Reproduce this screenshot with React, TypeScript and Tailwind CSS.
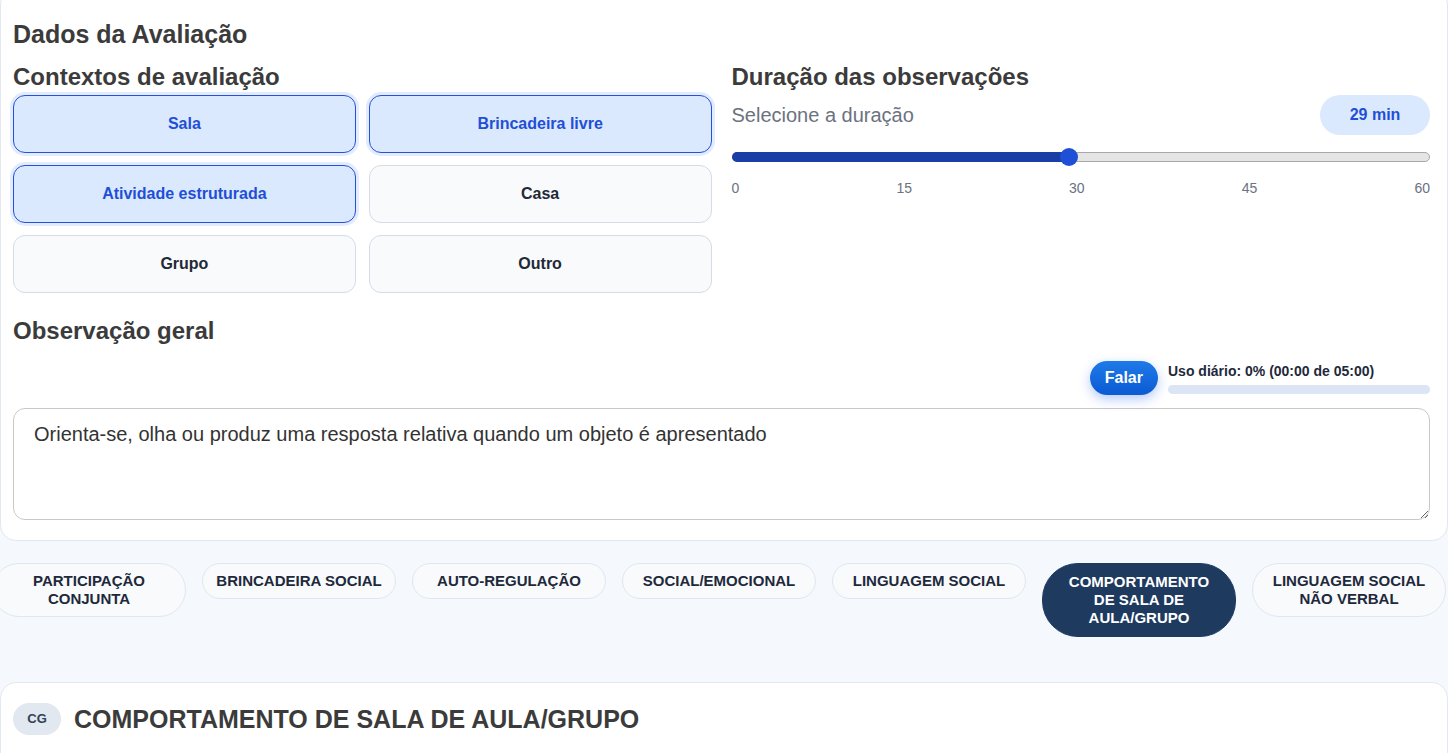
import { useState } from "react"

const contexts = [
  { label: "Sala", active: true },
  { label: "Brincadeira livre", active: true },
  { label: "Atividade estruturada", active: true },
  { label: "Casa", active: false },
  { label: "Grupo", active: false },
  { label: "Outro", active: false },
]

const tabs = [
  "PARTICIPAÇÃO CONJUNTA",
  "BRINCADEIRA SOCIAL",
  "AUTO-REGULAÇÃO",
  "SOCIAL/EMOCIONAL",
  "LINGUAGEM SOCIAL",
  "COMPORTAMENTO DE SALA DE AULA/GRUPO",
  "LINGUAGEM SOCIAL NÃO VERBAL",
]

export default function App() {
  const [minutes] = useState(29)
  const [activeTab] = useState(5)
  const pct = (minutes / 60) * 100

  return (
    <div className="min-h-screen overflow-hidden bg-[#f5f8fd] font-['Liberation_Sans',Arial,sans-serif]">
      {/* Dados da avaliação */}
      <div className="-mt-3 rounded-2xl border border-[#e2e8f0] bg-white px-3 pt-[29px] pb-5 text-[#3b3b3b]">
        <h2 className="text-[25px] leading-[32px] font-bold">Dados da Avaliação</h2>

        <div className="mt-[13px] grid grid-cols-2 gap-5 pr-[5px]">
          <div>
            <h3 className="text-[24px] leading-[28px] font-bold">Contextos de avaliação</h3>
            <div className="mt-1 grid grid-cols-2 gap-x-[13px] gap-y-3">
              {contexts.map((c) => (
                <button
                  key={c.label}
                  className={
                    c.active
                      ? "h-[58px] rounded-xl border border-[#2550d9] bg-[#dbe9fe] text-[16px] font-bold text-[#1f4fd6] shadow-[0_0_0_3px_rgba(219,231,254,0.8)]"
                      : "h-[58px] rounded-xl border border-[#d5dce6] bg-[#f8fafc] text-[16px] font-bold text-[#1f2937]"
                  }
                >
                  {c.label}
                </button>
              ))}
            </div>
          </div>

          <div>
            <h3 className="text-[24px] leading-[28px] font-bold">Duração das observações</h3>
            <div className="mt-1 flex items-center justify-between">
              <span className="text-[20px] text-[#6b7280]">Selecione a duração</span>
              <span className="flex h-10 w-[110px] items-center justify-center rounded-full bg-[#dbe9fe] text-[16px] font-bold text-[#1f4fd6]">
                {minutes} min
              </span>
            </div>
            <div className="relative mt-[12px] h-[20px]">
              <div className="absolute top-[5px] right-0 left-0 h-[10px] rounded-full border border-[#a8a8a8] bg-[#e5e5e5]" />
              <div
                className="absolute top-[5px] left-0 h-[10px] rounded-full bg-[#1a3ea6]"
                style={{ width: `${pct}%` }}
              />
              <div
                className="absolute top-[1px] h-[18px] w-[18px] -translate-x-1/2 rounded-full bg-[#1f4fd6]"
                style={{ left: `${pct}%` }}
              />
            </div>
            <div className="mt-[11px] flex justify-between text-[14px] leading-[20px] text-[#6b7280]">
              <span>0</span>
              <span>15</span>
              <span>30</span>
              <span>45</span>
              <span>60</span>
            </div>
          </div>
        </div>

        <h3 className="mt-6 text-[24px] leading-[28px] font-bold">Observação geral</h3>

        <div className="mt-4 mr-[5px] flex items-center justify-end gap-[10px]">
          <button className="h-[34px] rounded-full bg-gradient-to-b from-[#1f7ae8] to-[#0b5ad2] px-[15px] text-[16px] font-bold text-white shadow-[0_4px_12px_rgba(37,99,235,0.35)]">
            Falar
          </button>
          <div className="w-[262px]">
            <div className="text-[14px] leading-[16px] font-bold text-[#1e293b]">Uso diário: 0% (00:00 de 05:00)</div>
            <div className="mt-[6px] h-[9px] rounded-full bg-[#dbe5f5]" />
          </div>
        </div>

        <textarea
          className="mt-[13px] mr-[5px] block h-[112px] w-[calc(100%-5px)] rounded-xl border border-[#c8c8c8] px-5 py-[10px] text-[20px] text-[#333] outline-none"
          defaultValue="Orienta-se, olha ou produz uma resposta relativa quando um objeto é apresentado"
        />
      </div>

      {/* Abas de domínio */}
      <div className="-ml-2 flex h-[141px] items-start gap-4 pt-[22px]">
        {tabs.map((t, i) => (
          <button
            key={t}
            className={
              i === activeTab
                ? "w-[194px] shrink-0 rounded-[36px] border border-[#1e3a5f] bg-[#1e3a5f] px-6 py-[9px] text-[15px] leading-[18px] font-bold text-white"
                : "w-[194px] shrink-0 rounded-[36px] border border-[#e0e7f1] bg-[#f8fafc] px-3 py-[8px] text-[15px] leading-[18px] font-bold text-[#1e293b]"
            }
          >
            {t}
          </button>
        ))}
      </div>

      {/* Seção atual */}
      <div className="min-h-[100px] rounded-t-2xl border border-[#e2e8f0] bg-white px-3 pt-5">
        <div className="flex items-center gap-[13px]">
          <span className="flex h-8 w-12 items-center justify-center rounded-full bg-[#e2e8f0] text-[13px] font-bold text-[#334155]">
            CG
          </span>
          <h2 className="text-[25px] leading-[32px] font-bold text-[#3b3b3b]">COMPORTAMENTO DE SALA DE AULA/GRUPO</h2>
        </div>
      </div>
    </div>
  )
}
